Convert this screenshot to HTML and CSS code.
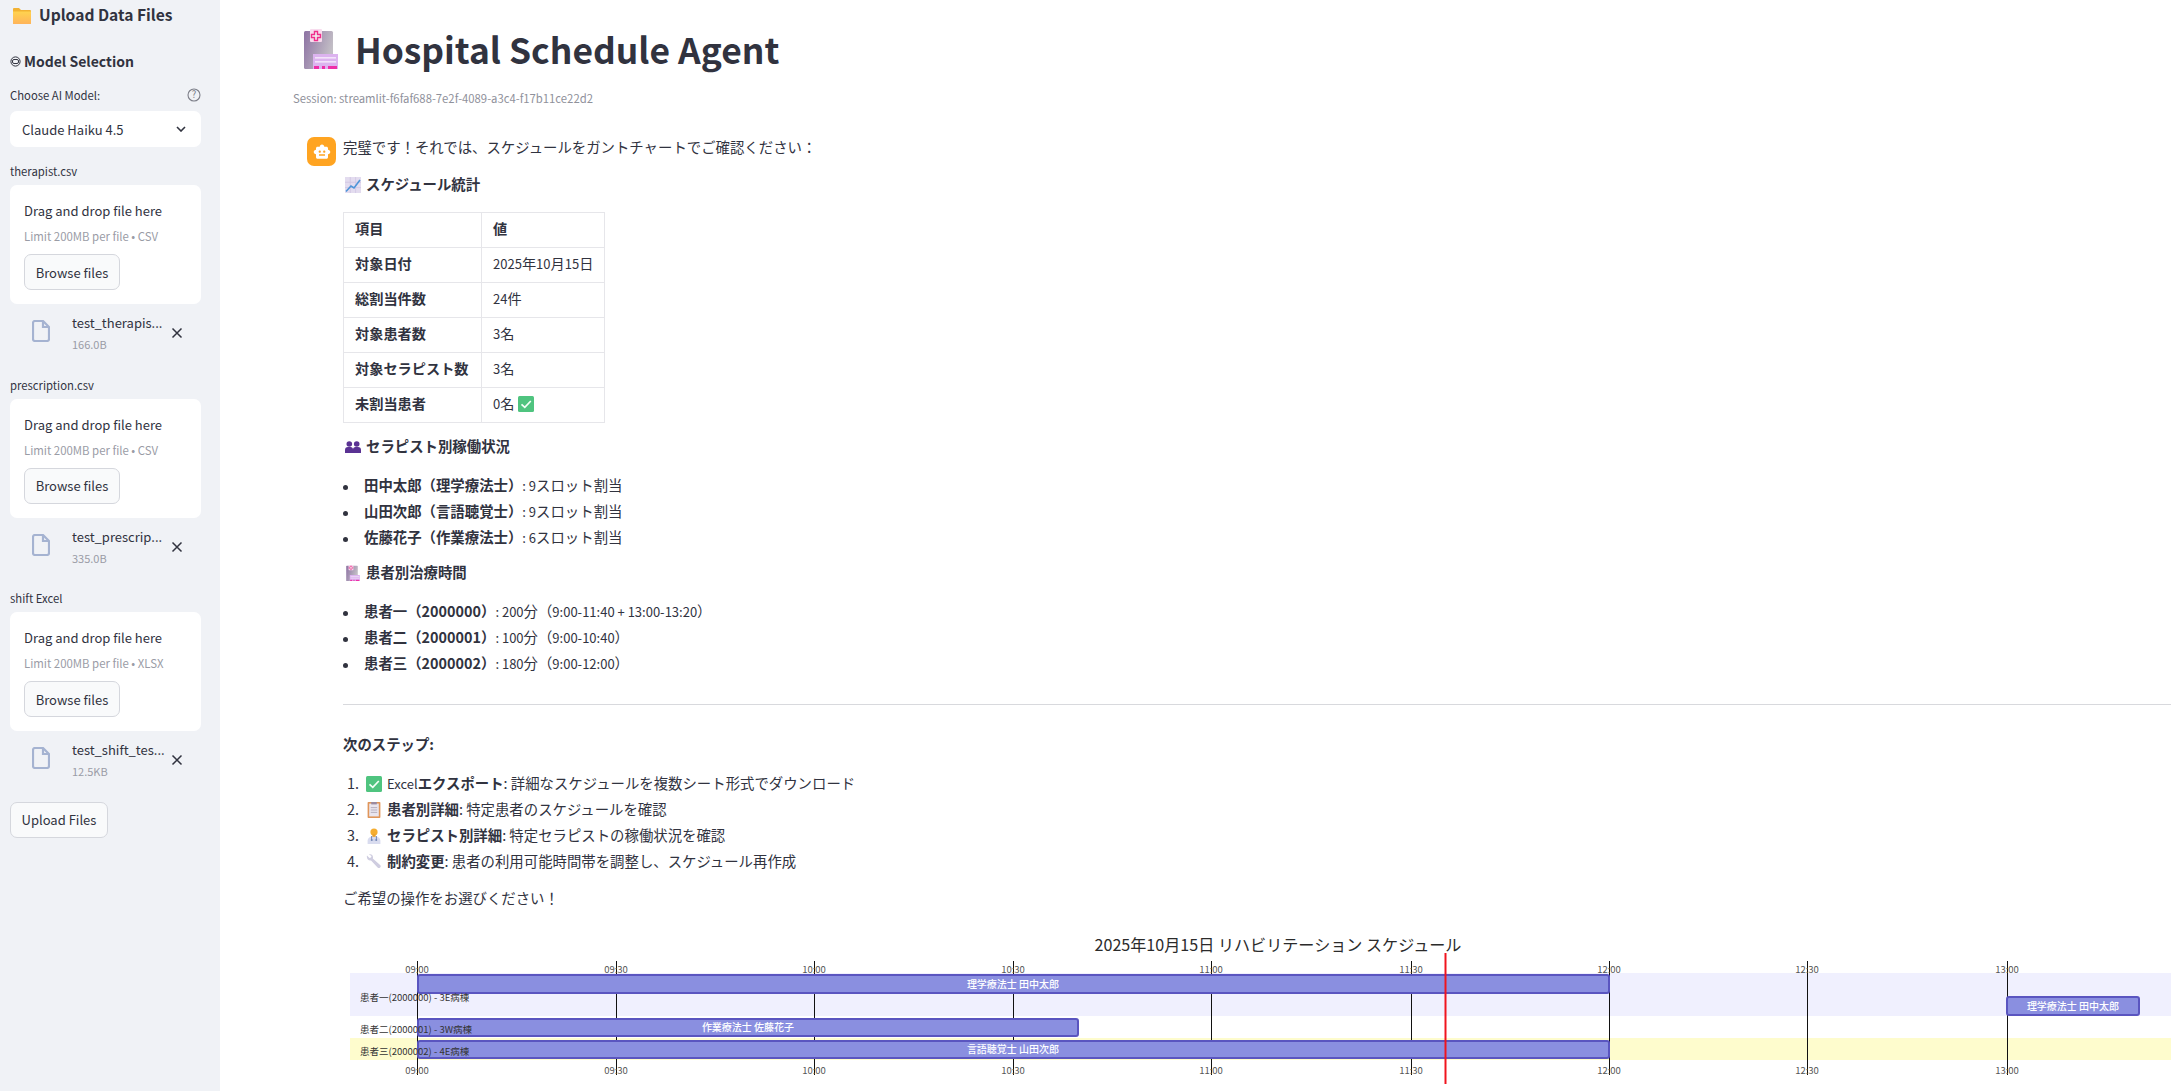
FILE: index.html
```html
<!DOCTYPE html>
<html lang="ja">
<head>
    <meta charset="UTF-8">
    <title>Hospital Schedule Agent</title>
    <link rel="stylesheet" href="styles.css">
</head>
<body>

    <!-- Shared icons -->
    <svg class="icon-defs" width="0" height="0">
        <defs>
            <linearGradient id="wallGrad" x1="0" y1="0" x2="1" y2="0.4">
                <stop offset="0" stop-color="#8d72a3"/>
                <stop offset="1" stop-color="#c3bfc6"/>
            </linearGradient>
            <linearGradient id="folderGrad" x1="0" y1="0" x2="0" y2="1">
                <stop offset="0" stop-color="#ffd34f"/>
                <stop offset="1" stop-color="#ffb45a"/>
            </linearGradient>
        </defs>
        <symbol id="i-hospital" viewBox="0 0 34 40">
            <rect x="0" y="2" width="29" height="38" rx="1.5" fill="url(#wallGrad)"/>
            <rect x="6" y="0" width="12" height="13" rx="1" fill="#f8dcee"/>
            <path d="M10.5 2.5h3v3h3v3h-3v3h-3v-3h-3v-3h3z" fill="#f2f2f2" stroke="#ef2f8c" stroke-width="1.4"/>
            <rect x="9" y="25" width="25" height="15" fill="#dcb3ef"/>
            <rect x="11" y="28" width="21" height="1.6" fill="#f3e3fa"/>
            <rect x="11" y="32" width="21" height="1.6" fill="#f3e3fa"/>
            <rect x="10" y="37" width="5" height="3" fill="#ee2fa8"/>
            <rect x="18" y="37" width="3" height="3" fill="#ee2fa8"/>
            <rect x="24" y="37" width="9" height="3" fill="#ee2fa8"/>
        </symbol>
        <symbol id="i-folder" viewBox="0 0 18 17">
            <path d="M0 2a1 1 0 0 1 1-1h5l2 2h9a1 1 0 0 1 1 1v12a1 1 0 0 1-1 1H1a1 1 0 0 1-1-1z" fill="#f2b233"/>
            <path d="M0 4.500h18V16a1 1 0 0 1-1 1H1a1 1 0 0 1-1-1z" fill="url(#folderGrad)"/>
        </symbol>
        <symbol id="i-bot" viewBox="0 0 24 24">
            <path fill="#ffffff" d="M20 9V7c0-1.100-.9-2-2-2h-3c0-1.660-1.340-3-3-3S9 3.340 9 5H6c-1.100 0-2 .9-2 2v2c-1.660 0-3 1.340-3 3s1.340 3 3 3v4c0 1.100.9 2 2 2h12c1.100 0 2-.9 2-2v-4c1.660 0 3-1.340 3-3s-1.340-3-3-3zM7.500 11.500c0-.83.67-1.500 1.500-1.500s1.500.67 1.500 1.500S9.830 13 9 13s-1.500-.67-1.500-1.500zM16 17H8v-2h8v2zm-1-4c-.83 0-1.500-.67-1.500-1.500S14.170 10 15 10s1.500.67 1.500 1.500S15.830 13 15 13z"/>
        </symbol>
        <symbol id="i-chart" viewBox="0 0 16 16">
            <rect width="16" height="16" fill="#e3dcef"/>
            <path d="M0 5.300h16M0 10.600h16M5.300 0v16M10.600 0v16" stroke="#cfc5e2" stroke-width=".8"/>
            <path d="M1 14.500 6 9l3 2 6-8" fill="none" stroke="#4d94d8" stroke-width="1.600"/>
        </symbol>
        <symbol id="i-people" viewBox="0 0 16 12">
            <g fill="#5a3293">
                <circle cx="4.300" cy="3" r="2.800"/>
                <circle cx="11.700" cy="3" r="2.800"/>
                <path d="M0 12V9a3 3 0 0 1 3-3h2.500a2.500 2.500 0 0 1 2.500 2.500V12zM8 12V8.500A2.500 2.500 0 0 1 10.500 6H13a3 3 0 0 1 3 3v3z"/>
            </g>
        </symbol>
        <symbol id="i-check" viewBox="0 0 16 16">
            <rect width="16" height="16" rx="1.500" fill="#4fc47f"/>
            <path d="M3.500 8.300 6.800 11.300 12.800 5" fill="none" stroke="#f3fff7" stroke-width="1.700"/>
        </symbol>
        <symbol id="i-clipboard" viewBox="0 0 16 20">
            <rect width="16" height="20" rx="1" fill="#e0965a"/>
            <rect x="2" y="2" width="12" height="16" fill="#e9e5ee"/>
            <rect x="4.500" y="0" width="7" height="3" fill="#9a8aa0"/>
            <path d="M4 7h8M4 10h8M4 13h8" stroke="#a9a2b4" stroke-width="1"/>
        </symbol>
        <symbol id="i-doctor" viewBox="0 0 16 20">
            <path d="M0 20v-4c0-3 3-6 8-6s8 3 8 6v4z" fill="#d9dcef"/>
            <path d="M5 10v6M11 10v6M4 15h3M9 15h3" stroke="#5b74a8" stroke-width="1" fill="none"/>
            <circle cx="8" cy="5" r="4.500" fill="#f5ad2f"/>
            <rect x="6" y="8" width="4" height="3" fill="#e8a02c"/>
        </symbol>
        <symbol id="i-wrench" viewBox="0 0 16 16">
            <path d="M1 1.500 3.500 4l1.500-.5.500-1.500L3 .5C5 -.2 7 1 7 3.200c0 .5 0 .8-.2 1.200l7.300 6.500c1.800 1.600-.8 4.300-2.500 2.500L5 6.500C2.500 7.200 .2 4.500 1 1.500z" fill="#cfcde0"/>
        </symbol>
        <symbol id="i-file" viewBox="0 0 18 22">
            <path d="M3 1h8l6 6v12a2 2 0 0 1-2 2H3a2 2 0 0 1-2-2V3a2 2 0 0 1 2-2z" fill="none" stroke="#a5b3d1" stroke-width="2.200"/>
            <path d="M11 1v6h6" fill="none" stroke="#a5b3d1" stroke-width="2.200"/>
        </symbol>
        <symbol id="i-close" viewBox="0 0 12 12">
            <path d="M1.500 1.500 10.500 10.500M10.500 1.500 1.500 10.500" stroke="#31333f" stroke-width="1.500" fill="none"/>
        </symbol>
    </svg>

    <div class="app">

        <!-- Sidebar -->
        <aside class="sidebar">
            <div class="side-title">
                <svg class="folder-icon"><use href="#i-folder"/></svg>
                <span>Upload Data Files</span>
            </div>

            <div class="side-heading">
                <svg class="model-icon" viewBox="0 0 11 11">
                    <circle cx="5.500" cy="5.500" r="4.600" fill="none" stroke="#31333f" stroke-width="1"/>
                    <rect x="2.500" y="3.500" width="6" height="4" rx="1.500" fill="none" stroke="#31333f" stroke-width="1"/>
                </svg>
                <span>Model Selection</span>
            </div>

            <div class="field-label">
                <span>Choose AI Model:</span>
                <svg class="help-icon" viewBox="0 0 14 14">
                    <circle cx="7" cy="7" r="6" fill="none" stroke="#7d7f89" stroke-width="1.100"/>
                    <text x="7" y="10.200" text-anchor="middle" class="help-mark">?</text>
                </svg>
            </div>
            <div class="select-box">
                <span>Claude Haiku 4.5</span>
                <svg class="chevron" viewBox="0 0 10 6">
                    <path d="M1 1 5 5 9 1" fill="none" stroke="#31333f" stroke-width="1.600"/>
                </svg>
            </div>

            <div class="upload-group">
                <div class="upload-label">therapist.csv</div>
                <div class="dropzone">
                    <div class="drop-text">Drag and drop file here</div>
                    <div class="drop-limit">Limit 200MB per file • CSV</div>
                    <button class="side-btn browse-btn">Browse files</button>
                </div>
                <div class="file-item">
                    <svg class="file-icon"><use href="#i-file"/></svg>
                    <div class="file-meta">
                        <div class="file-name">test_therapis...</div>
                        <div class="file-size">166.0B</div>
                    </div>
                    <svg class="close-icon"><use href="#i-close"/></svg>
                </div>
            </div>

            <div class="upload-group">
                <div class="upload-label">prescription.csv</div>
                <div class="dropzone">
                    <div class="drop-text">Drag and drop file here</div>
                    <div class="drop-limit">Limit 200MB per file • CSV</div>
                    <button class="side-btn browse-btn">Browse files</button>
                </div>
                <div class="file-item">
                    <svg class="file-icon"><use href="#i-file"/></svg>
                    <div class="file-meta">
                        <div class="file-name">test_prescrip...</div>
                        <div class="file-size">335.0B</div>
                    </div>
                    <svg class="close-icon"><use href="#i-close"/></svg>
                </div>
            </div>

            <div class="upload-group">
                <div class="upload-label">shift Excel</div>
                <div class="dropzone">
                    <div class="drop-text">Drag and drop file here</div>
                    <div class="drop-limit">Limit 200MB per file • XLSX</div>
                    <button class="side-btn browse-btn">Browse files</button>
                </div>
                <div class="file-item">
                    <svg class="file-icon"><use href="#i-file"/></svg>
                    <div class="file-meta">
                        <div class="file-name">test_shift_tes...</div>
                        <div class="file-size">12.5KB</div>
                    </div>
                    <svg class="close-icon"><use href="#i-close"/></svg>
                </div>
            </div>

            <button class="side-btn upload-btn">Upload Files</button>
        </aside>

        <!-- Main area -->
        <main class="main">
            <h1 class="page-title">
                <svg class="title-icon"><use href="#i-hospital"/></svg>
                <span>Hospital Schedule Agent</span>
            </h1>
            <div class="session">Session: streamlit-f6faf688-7e2f-4089-a3c4-f17b11ce22d2</div>

            <div class="message">
                <div class="avatar"><svg class="avatar-icon"><use href="#i-bot"/></svg></div>
                <div class="message-body">
                    <p class="lead">完璧です！それでは、スケジュールをガントチャートでご確認ください：</p>

                    <p class="sub-head first-head"><svg class="emoji"><use href="#i-chart"/></svg>スケジュール統計</p>
                    <table class="stats">
                        <tr><th>項目</th><th>値</th></tr>
                        <tr><th>対象日付</th><td><span class="lat">2025</span>年<span class="lat">10</span>月<span class="lat">15</span>日</td></tr>
                        <tr><th>総割当件数</th><td><span class="lat">24</span>件</td></tr>
                        <tr><th>対象患者数</th><td><span class="lat">3</span>名</td></tr>
                        <tr><th>対象セラピスト数</th><td><span class="lat">3</span>名</td></tr>
                        <tr><th>未割当患者</th><td><span class="lat">0</span>名 <svg class="emoji cell-emoji"><use href="#i-check"/></svg></td></tr>
                    </table>

                    <p class="sub-head"><svg class="emoji"><use href="#i-people"/></svg>セラピスト別稼働状況</p>
                    <ul class="plain-list">
                        <li><strong>田中太郎（理学療法士）</strong><span class="lat">: 9</span>スロット割当</li>
                        <li><strong>山田次郎（言語聴覚士）</strong><span class="lat">: 9</span>スロット割当</li>
                        <li><strong>佐藤花子（作業療法士）</strong><span class="lat">: 6</span>スロット割当</li>
                    </ul>

                    <p class="sub-head"><svg class="emoji"><use href="#i-hospital"/></svg>患者別治療時間</p>
                    <ul class="plain-list">
                        <li><strong>患者一（2000000）</strong><span class="lat">: 200</span>分（<span class="lat">9:00-11:40 + 13:00-13:20</span>）</li>
                        <li><strong>患者二（2000001）</strong><span class="lat">: 100</span>分（<span class="lat">9:00-10:40</span>）</li>
                        <li><strong>患者三（2000002）</strong><span class="lat">: 180</span>分（<span class="lat">9:00-12:00</span>）</li>
                    </ul>

                    <hr class="divider">

                    <p class="next-head">次のステップ:</p>
                    <ol class="steps">
                        <li><svg class="emoji"><use href="#i-check"/></svg><span class="lat">Excel</span><strong>エクスポート</strong>: 詳細なスケジュールを複数シート形式でダウンロード</li>
                        <li><svg class="emoji"><use href="#i-clipboard"/></svg><strong>患者別詳細</strong>: 特定患者のスケジュールを確認</li>
                        <li><svg class="emoji"><use href="#i-doctor"/></svg><strong>セラピスト別詳細</strong>: 特定セラピストの稼働状況を確認</li>
                        <li><svg class="emoji"><use href="#i-wrench"/></svg><strong>制約変更</strong>: 患者の利用可能時間帯を調整し、スケジュール再作成</li>
                    </ol>
                    <p class="closing">ご希望の操作をお選びください！</p>

                    <!-- Gantt chart: x = time, so everything sits on the svg canvas -->
                    <svg class="gantt" width="1828" height="151" viewBox="0 0 1828 151">
                        <text x="935" y="12" class="g-title">2025年10月15日 リハビリテーション スケジュール</text>

                        <rect x="7" y="34" width="1821" height="43" fill="#f0f0fe"/>
                        <rect x="7" y="99" width="1821" height="22" fill="#fefccd"/>

                        <g class="g-grid">
                            <path d="M74.500 22V136M273.500 22V136M471.500 22V136M670.500 22V136M868.500 22V136M1068.500 22V136M1266.500 22V136M1464.500 22V136M1664.500 22V136"/>
                        </g>

                        <g class="g-tick">
                            <text x="74" y="34">09:00</text><text x="273" y="34">09:30</text><text x="471" y="34">10:00</text>
                            <text x="670" y="34">10:30</text><text x="868" y="34">11:00</text><text x="1068" y="34">11:30</text>
                            <text x="1266" y="34">12:00</text><text x="1464" y="34">12:30</text><text x="1664" y="34">13:00</text>
                            <text x="74" y="135">09:00</text><text x="273" y="135">09:30</text><text x="471" y="135">10:00</text>
                            <text x="670" y="135">10:30</text><text x="868" y="135">11:00</text><text x="1068" y="135">11:30</text>
                            <text x="1266" y="135">12:00</text><text x="1464" y="135">12:30</text><text x="1664" y="135">13:00</text>
                        </g>

                        <g class="g-bar">
                            <rect x="75" y="36" width="1191" height="18" rx="2"/>
                            <rect x="75" y="80" width="660" height="17" rx="2"/>
                            <rect x="75" y="102" width="1191" height="17" rx="2"/>
                            <rect x="1664" y="58" width="132" height="18" rx="2"/>
                        </g>

                        <g class="g-bar-text">
                            <text x="670" y="49">理学療法士 田中太郎</text>
                            <text x="405" y="92">作業療法士 佐藤花子</text>
                            <text x="670" y="114">言語聴覚士 山田次郎</text>
                            <text x="1730" y="71">理学療法士 田中太郎</text>
                        </g>

                        <g class="g-label">
                            <text x="17" y="62">患者一(2000000) - 3E病棟</text>
                            <text x="17" y="94">患者二(2000001) - 3W病棟</text>
                            <text x="17" y="116">患者三(2000002) - 4E病棟</text>
                        </g>

                        <path d="M1102.500 14V145" stroke="#f0141e" stroke-width="2"/>
                    </svg>
                </div>
            </div>
        </main>
    </div>

</body>
</html>
```

FILE: styles.css
```css
html, body {
    height: 100%;
    margin: 0;
    overflow: hidden;
}

body {
    font-family: "Noto Sans CJK JP", "Noto Sans", sans-serif;
    font-size: 14.4px;
    color: #31333f;
    background-color: white;
}

.icon-defs {
    position: absolute;
}

.app {
    display: flex;
    height: 100%;
}

/* Sidebar styling */
.sidebar {
    flex: 0 0 220px;
    box-sizing: border-box;
    padding: 0 19px 0 10px;
    background-color: #f0f2f6;
    font-size: 13px;
}

.side-title {
    display: flex;
    align-items: center;
    height: 28px;
    font-size: 15.6px;
    font-weight: 600;
}

.folder-icon {
    width: 18px;
    height: 17px;
    margin: 2px 8px 0 3px;
}

.side-heading {
    display: flex;
    align-items: center;
    height: 24px;
    margin-top: 21px;
    font-size: 14px;
    font-weight: 600;
}

.model-icon {
    width: 11px;
    height: 11px;
    margin-right: 3px;
}

.field-label {
    display: flex;
    justify-content: space-between;
    align-items: center;
    height: 20px;
    margin-top: 12px;
    font-size: 11.3px;
}

.help-icon {
    width: 14px;
    height: 14px;
}

.help-mark {
    font-size: 9.5px;
    fill: #7d7f89;
}

.select-box {
    display: flex;
    justify-content: space-between;
    align-items: center;
    height: 36px;
    margin: 6px 0 14px;
    padding: 0 15px 0 12px;
    background: white;
    border-radius: 7px;
}

.chevron {
    width: 10px;
    height: 6px;
}

/* File uploader */
.upload-group {
    height: 213.5px;
}

.upload-label {
    height: 20px;
    line-height: 20px;
    margin-bottom: 4px;
    font-size: 11.3px;
}

.dropzone {
    height: 119px;
    box-sizing: border-box;
    padding: 16px 14px 0;
    background: white;
    border-radius: 7px;
}

.drop-text {
    line-height: 20px;
}

.drop-limit {
    margin-top: 7px;
    line-height: 16px;
    font-size: 11.4px;
    color: #9a9ca6;
}

.side-btn {
    display: block;
    height: 36px;
    padding: 0;
    background: #f9fafb;
    border: 1px solid #d5d7dd;
    border-radius: 7px;
    color: #31333f;
    font-family: inherit;
    font-size: 13px;
}

.browse-btn {
    width: 96px;
    margin-top: 10px;
}

.upload-btn {
    width: 98px;
}

.file-item {
    display: flex;
    align-items: flex-start;
    padding: 9px 0 0 22px;
}

.file-icon {
    width: 18px;
    height: 22px;
    margin: 7px 22px 0 0;
}

.file-meta {
    width: 92px;
}

.file-name {
    line-height: 20px;
    white-space: nowrap;
}

.file-size {
    margin-top: 1px;
    line-height: 20px;
    font-size: 11px;
    color: #9a9ca6;
}

.close-icon {
    width: 12px;
    height: 12px;
    margin: 14px 0 0 7px;
}

/* Main content */
.main {
    flex: 1;
    min-width: 0;
    padding-left: 73px;
    overflow: hidden;
}

.page-title {
    display: flex;
    align-items: center;
    height: 60px;
    margin: 18px 0 0;
    padding-left: 11px;
    font-size: 35.4px;
    font-weight: 700;
}

.title-icon {
    width: 34px;
    height: 40px;
    margin: 2px 17px 0 0;
}

.session {
    margin-top: 10px;
    line-height: 20px;
    font-size: 11.3px;
    color: #8f919b;
}

.message {
    display: flex;
    margin-top: 27px;
    padding-left: 14px;
}

.avatar {
    display: flex;
    justify-content: center;
    align-items: center;
    flex: 0 0 29px;
    height: 29px;
    margin: 2px 7px 0 0;
    background: #ffa421;
    border-radius: 7px;
}

.avatar-icon {
    width: 18px;
    height: 18px;
}

.message-body {
    flex: 0 0 1828px;
    line-height: 24px;
}

.message-body p {
    margin: 0;
}

/* digits and latin run narrower than the CJK text next to them */
.lat {
    font-size: 13px;
    line-height: 1;
}

.lead {
    height: 24px;
}

.sub-head {
    padding-bottom: 2px;
    font-weight: 600;
}

.message-body .sub-head {
    margin-top: 10px;
}

.message-body .first-head {
    margin-top: 13px;
}

.emoji {
    width: 16px;
    height: 16px;
    margin: 0 5px 0 2px;
    vertical-align: -3px;
}

.cell-emoji {
    margin: 0;
}

/* Stats table */
.stats {
    width: 262px;
    margin-top: 14px;
    table-layout: fixed;
    border-collapse: collapse;
}

.message-body .stats + .sub-head {
    margin-top: 11px;
}

.stats th, .stats td {
    height: 35px;
    box-sizing: border-box;
    padding: 0 11px 4px;
    border: 1px solid #e6e6ea;
    text-align: left;
    font-size: 14.2px;
    white-space: nowrap;
}

.stats th {
    font-weight: 600;
}

.stats th:first-child {
    width: 138px;
}

/* Lists */
.plain-list {
    margin: 12px 0 0;
    padding: 0;
    list-style: none;
}

.plain-list li {
    line-height: 26px;
}

.plain-list li::before {
    content: "";
    display: inline-block;
    width: 5px;
    height: 5px;
    margin-right: 16px;
    border-radius: 50%;
    background: #31333f;
    vertical-align: middle;
}

strong {
    font-weight: 600;
}

.divider {
    height: 1px;
    margin: 28px 0 0;
    border: none;
    background: #d8d9dd;
}

.message-body .next-head {
    margin-top: 27px;
    font-weight: 600;
}

.steps {
    margin: 13.5px 0 0;
    padding: 0 0 0 4px;
    list-style: none;
    counter-reset: step;
}

.steps li {
    line-height: 26px;
    counter-increment: step;
}

.steps li::before {
    content: counter(step) ".";
    display: inline-block;
    width: 17px;
}

.message-body .closing {
    margin-top: 12px;
}

/* Gantt chart */
.gantt {
    display: block;
    margin-top: 29px;
    overflow: visible;
}

.g-title {
    font-size: 16.1px;
    fill: #2b2b2b;
    text-anchor: middle;
}

.g-grid path {
    stroke: #111111;
    stroke-width: 1;
    fill: none;
}

.g-tick text {
    font-size: 9.5px;
    fill: #555555;
    text-anchor: middle;
}

.g-bar rect {
    fill: #8a8fe0;
    stroke: #5a55c0;
    stroke-width: 2;
}

.g-bar-text text {
    font-size: 10px;
    font-weight: 500;
    fill: white;
    text-anchor: middle;
}

.g-label text {
    font-size: 9.5px;
    fill: #333333;
}
```
